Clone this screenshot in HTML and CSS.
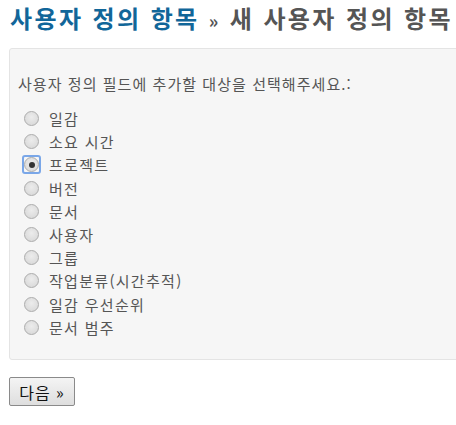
FILE: index.html
```html
<!DOCTYPE html>
<html lang="ko">
<head>
<meta charset="utf-8">
<title>새 사용자 정의 항목</title>
<link rel="stylesheet" href="styles.css">
</head>
<body>
<h2 class="title"><a class="crumb" href="#">사용자 정의 항목</a> <span class="sep">»</span> 새 사용자 정의 항목</h2>
<form class="form">
  <div class="box">
    <p class="intro">사용자 정의 필드에 추가할 대상을 선택해주세요.:</p>
    <ul class="types">
      <li><label class="opt"><input class="radio" type="radio" name="type"> 일감</label></li>
      <li><label class="opt"><input class="radio" type="radio" name="type"> 소요 시간</label></li>
      <li><label class="opt"><input class="radio focus" type="radio" name="type" checked> 프로젝트</label></li>
      <li><label class="opt"><input class="radio" type="radio" name="type"> 버전</label></li>
      <li><label class="opt"><input class="radio" type="radio" name="type"> 문서</label></li>
      <li><label class="opt"><input class="radio" type="radio" name="type"> 사용자</label></li>
      <li><label class="opt"><input class="radio" type="radio" name="type"> 그룹</label></li>
      <li><label class="opt"><input class="radio" type="radio" name="type"> 작업분류(시간추적)</label></li>
      <li><label class="opt"><input class="radio" type="radio" name="type"> 일감 우선순위</label></li>
      <li><label class="opt"><input class="radio" type="radio" name="type"> 문서 범주</label></li>
    </ul>
  </div>
  <p class="actions"><button class="btn" type="button">다음 »</button></p>
</form>
</body>
</html>
```
FILE: styles.css
```css
html { overflow: hidden; }
body {
  margin: 0;
  font-family: "Noto Sans CJK KR", "Noto Sans", sans-serif;
  color: #555;
  background: #fff;
}
.title {
  margin: 0;
  padding: 2px 0 0 10px;
  font-size: 24px;
  line-height: 32px;
  font-weight: bold;
  letter-spacing: 2.4px;
  color: #555;
  white-space: nowrap;
}
.crumb { color: #169; text-decoration: none; }
.sep { font-size: 18px; }
.form { margin: 0; }
.box {
  margin: 12px 0 0 9px;
  width: 470px;
  height: 312px;
  background: #f6f6f6;
  border: 1px solid #e4e4e4;
  border-radius: 3px;
  padding: 24px 0 0 8px;
  box-sizing: border-box;
}
.intro {
  margin: 0 0 12px 0;
  font-size: 15px;
  line-height: 22px;
  letter-spacing: 1.05px;
}
.types {
  list-style: none;
  margin: 0;
  padding: 0 0 0 5px;
}
.types li { height: 23.2px; }
.opt {
  display: flex;
  align-items: center;
  height: 23.2px;
  font-size: 15px;
  letter-spacing: 1.3px;
  color: #555;
  gap: 10px;
}
.radio {
  appearance: none;
  -webkit-appearance: none;
  margin: 0 0 0 1px;
  width: 15px;
  height: 15px;
  border-radius: 50%;
  border: 1px solid #acacac;
  background: radial-gradient(circle at 50% 40%, #ececec 0%, #dcdcdc 70%, #d2d2d2 100%);
  box-sizing: border-box;
  position: relative;
  outline: none;
}
.radio:checked::after {
  content: "";
  position: absolute;
  left: 3.5px; top: 3.5px;
  width: 6px; height: 6px;
  border-radius: 50%;
  background: #333;
}
.radio.focus::before {
  content: "";
  position: absolute;
  left: -3px; top: -3px; right: -3px; bottom: -3px;
  border: 2px solid #7aa7e8;
  border-radius: 3px;
}
.actions { margin: 17px 0 0 9px; }
.btn {
  font-family: "Noto Sans CJK KR", sans-serif;
  font-size: 16px;
  letter-spacing: 1px;
  color: #111;
  height: 29px;
  width: 66px;
  padding: 0;
  border: 1px solid #8a8a8a;
  border-radius: 2px;
  background: linear-gradient(#f4f4f4, #dedede);
}
```
